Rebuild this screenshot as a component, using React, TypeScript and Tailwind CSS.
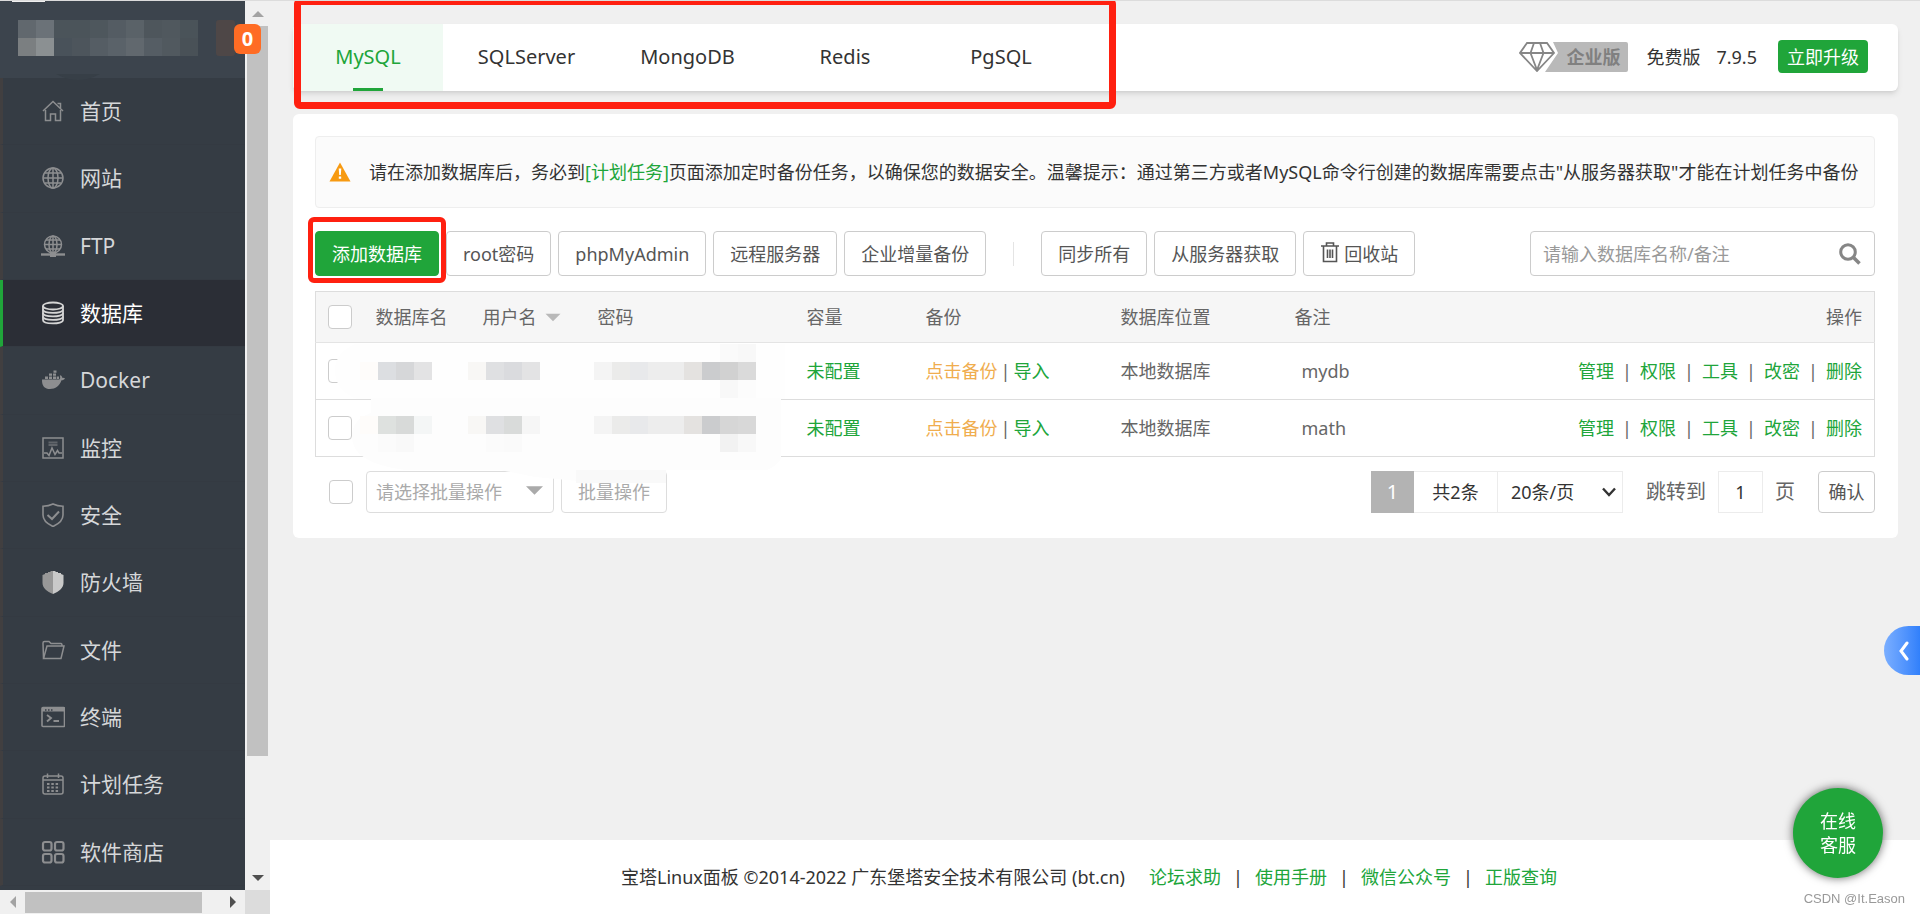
import type { ReactNode } from "react";

const navItems: { label: string; icon: ReactNode; active?: boolean }[] = [
  {
    label: "首页",
    icon: (
      <g strokeWidth="1.5">
        <path d="M2 12 L12 2.5 L22 12" />
        <path d="M4.500 11 V21.500 H9.500 V15 H14.500 V21.500 H19.500 V11" />
        <path d="M16.500 4.500 H19.500 V9" />
      </g>
    ),
  },
  {
    label: "网站",
    icon: (
      <g strokeWidth="1.5">
        <circle cx="12" cy="12" r="10" />
        <ellipse cx="12" cy="12" rx="5" ry="10" />
        <path d="M12 2 V22 M2 12 H22 M4 7 H20 M4 17 H20" />
      </g>
    ),
  },
  {
    label: "FTP",
    icon: (
      <g strokeWidth="1.5">
        <circle cx="12" cy="10.500" r="8.500" />
        <ellipse cx="12" cy="10.500" rx="4" ry="8.500" />
        <path d="M12 2 V19 M3.500 10.500 H20.500 M5 6 H19 M5 15 H19" />
        <path d="M0 20.500 H24" strokeWidth="2.4" />
        <path d="M9 21 H15" strokeWidth="4" />
      </g>
    ),
  },
  {
    label: "数据库",
    active: true,
    icon: (
      <g strokeWidth="1.8">
        <ellipse cx="12" cy="5" rx="10" ry="3.500" />
        <path d="M2 5 V19 C2 23.600 22 23.600 22 19 V5" />
        <path d="M2 8.500 C2 13 22 13 22 8.500 M2 12 C2 16.500 22 16.500 22 12 M2 15.500 C2 20 22 20 22 15.500" />
      </g>
    ),
  },
  {
    label: "Docker",
    icon: (
      <g fill="currentColor" stroke="none">
        <path d="M1 11.500 H18.500 C19.500 10.500 19.300 9 18.800 7.800 L19.800 7.200 C20.800 8 21.200 9 21.200 9.700 C22.200 9.500 23.200 9.700 24 10.300 C23.300 11.800 22 12.300 20.500 12.300 C18.500 18 14.500 21 9 21 C4 21 0.800 18.500 1 11.500 Z" />
        <path d="M4 8.500 h3 v2.400 h-3z M8 8.500 h3 v2.400 h-3z M12 8.500 h3 v2.400 h-3z M8 5.500 h3 v2.300 h-3z M12 5.500 h3 v2.300 h-3z M12.500 2.500 h3 v2.200 h-3z M15.700 8.500 h2.300 v2.400 h-2.300z" />
      </g>
    ),
  },
  {
    label: "监控",
    icon: (
      <g strokeWidth="1.5">
        <rect x="2" y="2" width="20" height="20" />
        <path d="M7.500 6.500 H16.500 M7.500 9 H16.500" opacity="0.5" strokeWidth="2" />
        <path d="M3 17 H6 L8 19.500 L11 12 L14 18.500 L16.500 14.500 L18 17 H21" />
      </g>
    ),
  },
  {
    label: "安全",
    icon: (
      <g strokeWidth="1.6">
        <path d="M12 1 C9 2.500 5.500 3.200 2 3.200 V12 C2 17.500 6.500 21 12 23.500 C17.500 21 22 17.500 22 12 V3.200 C18.500 3.200 15 2.500 12 1 Z" />
        <path d="M6.500 12 L11 16 L18 8.500" strokeWidth="2" />
      </g>
    ),
  },
  {
    label: "防火墙",
    icon: (
      <g stroke="none">
        <path d="M1.500 5 L4 4 V3 H7 V2 H9.500 V1 H12 V24 C6 21.500 1.500 18 1.500 13 Z" fill="#989898" />
        <path d="M12 1 L14.500 1 V2 H17 V3 H20 V4 L22.500 5 V13 C22.500 18 18 21.500 12 24 Z" fill="#c9c9c9" />
      </g>
    ),
  },
  {
    label: "文件",
    icon: (
      <g strokeWidth="1.5">
        <path d="M2.500 20 L2 5 Q2 3.500 3.500 3.500 H8 L10 5.500 H20 Q21 5.500 21 8" />
        <path d="M6 8 H23 L20 20.500 H2.500 Z" />
      </g>
    ),
  },
  {
    label: "终端",
    icon: (
      <g strokeWidth="1.6">
        <rect x="1" y="2.500" width="22.500" height="19" rx="1" />
        <rect x="1" y="2.500" width="22.500" height="4" fill="currentColor" stroke="none" />
        <path d="M6 10 L10 13 L6 16.500 M12.500 16 H18" strokeWidth="1.9" />
        <path d="M4 5 h1.500 M7 5 h1.500 M10 5 h1.500" stroke="#353c44" />
      </g>
    ),
  },
  {
    label: "计划任务",
    icon: (
      <g strokeWidth="1.5">
        <rect x="2" y="4" width="20" height="18" rx="2" />
        <path d="M2 8 H22 M6.500 1.500 V6 M17.500 1.500 V6" />
        <path d="M6 12 H19 M6 15.500 H19 M6 19 H19" strokeDasharray="2.5 1.8" strokeWidth="2" />
      </g>
    ),
  },
  {
    label: "软件商店",
    icon: (
      <g strokeWidth="2.2">
        <rect x="2" y="2" width="8.500" height="8.500" rx="2" />
        <rect x="14" y="2" width="8.500" height="8.500" rx="2" />
        <rect x="2" y="14" width="8.500" height="8.500" rx="2" />
        <rect x="14" y="14" width="8.500" height="8.500" rx="2" />
      </g>
    ),
  },
];

const tabs = [
  { label: "MySQL", width: "w-[150px]", active: true },
  { label: "SQLServer", width: "w-[167px]" },
  { label: "MongoDB", width: "w-[155px]" },
  { label: "Redis", width: "w-[160px]" },
  { label: "PgSQL", width: "w-[152px]" },
];

const databases = ["mydb", "math"];
const actions = ["管理", "权限", "工具", "改密", "删除"];
const footerLinks = ["论坛求助", "使用手册", "微信公众号", "正版查询"];

const titleMosaic = [
  ["#61686e", "#6b7278", "#4b545a", "#4b545a", "#4e575d", "#545c63", "#5a6268", "#4e565c", "#50585e", "#4a5359"],
  ["#7b7f81", "#8b9092", "#49525a", "#4d555c", "#555d64", "#5a6269", "#61686e", "#555d64", "#51595f", "#495157"],
];

// x, y, colour of each 18px block that hides the credentials
const cellMosaic: [number, number, string][] = [
  [45, 71, "#fefcfa"], [63, 71, "#dcdee1"], [81, 71, "#d6d7d9"], [99, 71, "#e3e3e4"],
  [153, 71, "#f8f7f5"], [171, 71, "#dfe0e2"], [189, 71, "#dadbde"], [207, 71, "#e3e3e4"],
  [279, 71, "#f4f4f4"], [297, 71, "#ebebea"], [315, 71, "#e8e9eb"], [333, 71, "#ededed"], [351, 71, "#ededed"],
  [369, 71, "#e4e2e0"], [387, 71, "#cbccce"], [405, 71, "#d1d1d1"], [423, 71, "#dadada"],
  [405, 53, "#fafafa"], [423, 53, "#f8f8f8"], [405, 89, "#f8f8f8"], [423, 89, "#fcfcfc"],
  [45, 125, "#fefcfa"], [63, 125, "#dee1df"], [81, 125, "#d8dad9"], [99, 125, "#f4f6f6"],
  [153, 125, "#f8f7f5"], [171, 125, "#dfe0e2"], [189, 125, "#d9dbda"], [207, 125, "#f6f6f6"],
  [279, 125, "#f4f4f4"], [297, 125, "#ebebea"], [315, 125, "#e8e9eb"], [333, 125, "#ededed"], [351, 125, "#ededed"],
  [369, 125, "#e4e2e0"], [387, 125, "#cbccce"], [405, 125, "#d6d6d6"], [423, 125, "#d8d8d8"],
  [63, 143, "#fbfbfb"], [81, 143, "#f9f9f9"], [171, 143, "#fbfbfb"], [189, 143, "#fafafa"],
  [405, 143, "#f2f2f2"], [423, 143, "#f8f8f8"],
];

function Checkbox({ label }: { label: string }) {
  return (
    <input
      type="checkbox"
      aria-label={label}
      className="block size-6 shrink-0 appearance-none rounded-sm border border-[#ccc] bg-white"
    />
  );
}

function ToolButton({ children }: { children: ReactNode }) {
  return (
    <button className="flex h-[45px] shrink-0 items-center gap-1 rounded border border-[#ccc] bg-white px-4 text-[#555] hover:bg-gray-50">
      {children}
    </button>
  );
}

function Arrow({ className, points }: { className: string; points: string }) {
  return (
    <svg viewBox="0 0 12 12" className={className} fill="currentColor" aria-hidden="true">
      <polygon points={points} />
    </svg>
  );
}

function Sidebar() {
  return (
    <aside className="sticky top-0 flex h-screen w-[270px] shrink-0 flex-col bg-[#f0f0f0]">
      <div className="flex min-h-0 flex-1">
        <div className="flex w-[245px] flex-col bg-[#353c44]">
          <div className="relative h-[78px] shrink-0 border-t border-[#dcdcdc] bg-[#3c444d]">
            <svg className="block" width="245" height="80" viewBox="0 1 245 80" aria-hidden="true">
              <rect x="12" y="0" width="33" height="2" fill="#f0f0f0" />
              {titleMosaic.map((row, y) =>
                row.map((fill, x) => (
                  <rect key={`${x}-${y}`} x={18 + x * 18} y={20 + y * 18} width="18" height="18" fill={fill} />
                ))
              )}
              <rect x="216" y="20" width="19" height="36" rx="3" fill="#4e4747" />
              <path d="M56 74 H100 Q78 86 56 74 Z" fill="#373f47" />
            </svg>
            <span className="absolute top-[23px] left-[234px] z-10 flex h-[30px] w-[27px] items-center justify-center rounded-md bg-[#ff6c24] text-xl font-bold text-white">
              0
            </span>
          </div>
          <nav className="flex min-h-0 flex-1 flex-col pb-1">
            {navItems.map((item) => (
              <a
                key={item.label}
                href="#"
                className={`flex flex-1 items-center border-b border-l-[3px] border-b-[#343a42] pl-[38px] text-[21px] ${
                  item.active ? "border-l-[#20a53a] bg-[#2b2e36] text-white" : "border-l-[#413f40] text-[#d5d7d9]"
                }`}
              >
                <svg
                  viewBox="0 0 24 24"
                  fill="none"
                  stroke="currentColor"
                  className={`mr-[15px] size-6 ${item.active ? "text-[#d5d5d5]" : "text-[#8d8e90]"}`}
                  aria-hidden="true"
                >
                  {item.icon}
                </svg>
                {item.label}
              </a>
            ))}
          </nav>
        </div>
        <div className="flex w-[25px] flex-col items-center border-t border-[#dcdcdc] pr-[2px] pl-[2px]">
          <div className="flex h-[25px] items-center">
            <Arrow className="size-3 text-[#a3a3a3]" points="0,9 6,3 12,9" />
          </div>
          <div className="min-h-0 w-full flex-1">
            <div className="h-[87%] bg-[#c1c1c1]" />
          </div>
          <div className="flex h-[25px] items-center">
            <Arrow className="size-3 text-[#505050]" points="0,3 12,3 6,9" />
          </div>
        </div>
      </div>
      <div className="flex h-6 shrink-0 items-center">
        <div className="flex w-[25px] justify-center">
          <Arrow className="size-3 text-[#a3a3a3]" points="9,0 9,12 3,6" />
        </div>
        <div className="h-[21px] w-[177px] bg-[#c1c1c1]" />
        <div className="flex flex-1 justify-end pr-[6px]">
          <Arrow className="size-3 text-[#505050]" points="3,0 9,6 3,12" />
        </div>
        <div className="h-full w-[25px] bg-[#dcdcdc]" />
      </div>
    </aside>
  );
}

function Header() {
  return (
    <header className="relative flex h-[67px] items-center justify-between rounded-md bg-white pr-[30px] shadow-md">
      <div className="flex h-full">
        {tabs.map((tab) => (
          <button
            key={tab.label}
            className={`flex flex-col items-center text-xl ${tab.width} ${
              tab.active ? "rounded-l-md bg-[#f0faf3] text-[#20a53a]" : "text-[#333]"
            }`}
          >
            <span className="flex flex-1 items-center pt-[2px]">{tab.label}</span>
            <span className={`h-[3px] w-[30px] ${tab.active ? "bg-[#20a53a]" : ""}`} />
          </button>
        ))}
      </div>
      <div className="flex items-center pb-[2px] text-lg text-[#333]">
        <div className="relative flex items-center">
          <svg width="109" height="30" viewBox="0 0 109 30" fill="none" aria-hidden="true">
            <path d="M34 0 H107 Q109 0 109 2 V28 Q109 30 107 30 H26 L39 11 Z" fill="#b9b9b9" />
            <path
              d="M8 1 H28 L35 11 L18 29 L1 11 Z M1 11 H35 M11.500 11 L18 28 L24.500 11 L21 1 M11.500 11 L15 1"
              stroke="#868686"
              strokeWidth="1.8"
            />
          </svg>
          <span className="absolute right-2 text-lg leading-none font-bold text-[#808080]">企业版</span>
        </div>
        <span className="ml-[18px]">免费版</span>
        <span className="ml-4">7.9.5</span>
        <button className="ml-[21px] flex h-[33px] items-center rounded bg-[#20a53a] px-[9px] text-white">立即升级</button>
      </div>
      <div className="pointer-events-none absolute -top-[26px] left-px h-[111px] w-[822px] rounded-md border-[7px] border-[#ff2010]" />
    </header>
  );
}

function DatabaseTable() {
  return (
    <div className="relative mt-[15px]">
      <table className="w-full table-fixed border-collapse border border-[#ddd] text-left text-lg text-[#666]">
        <thead>
          <tr className="h-[51px] border-b border-[#e4e4e4] bg-[#f6f6f6]">
            <th className="w-[49px] pl-3">
              <Checkbox label="全选" />
            </th>
            <th className="w-[107px] pl-[11px] font-normal">数据库名</th>
            <th className="w-[115px] pl-[11px] font-normal">
              <span className="flex items-center gap-2">
                用户名
                <Arrow className="h-[15px] w-4 text-[#b9b9b9]" points="0,3 12,3 6,9" />
              </span>
            </th>
            <th className="w-[209px] pl-[11px] font-normal">密码</th>
            <th className="w-[119px] pl-[11px] font-normal">容量</th>
            <th className="w-[195px] pl-[11px] font-normal">备份</th>
            <th className="w-[174px] pl-[11px] font-normal">数据库位置</th>
            <th className="pl-[11px] font-normal">备注</th>
            <th className="w-[300px] pr-3 text-right font-normal">操作</th>
          </tr>
        </thead>
        <tbody>
          {databases.map((name) => (
            <tr key={name} className="h-[57px] border-b border-[#ddd]">
              <td className="pl-3">
                <Checkbox label={name} />
              </td>
              <td />
              <td />
              <td />
              <td className="pl-[11px]">
                <a href="#" className="text-[#20a53a]">未配置</a>
              </td>
              <td className="pl-[11px]">
                <a href="#" className="text-[#f0ad4e]">点击备份</a>
                <span className="px-[3px]">|</span>
                <a href="#" className="text-[#20a53a]">导入</a>
              </td>
              <td className="pl-[11px]">本地数据库</td>
              <td className="pl-[18px]">{name}</td>
              <td className="pr-3">
                <div className="flex justify-end">
                  {actions.map((action, i) => (
                    <span key={action} className="flex">
                      {i > 0 && <span className="w-[26px] text-center">|</span>}
                      <a href="#" className="text-[#20a53a]">{action}</a>
                    </span>
                  ))}
                </div>
              </td>
            </tr>
          ))}
        </tbody>
      </table>
      <svg
        className="pointer-events-none absolute top-0 left-0 z-10"
        width="480"
        height="206"
        viewBox="0 0 480 206"
        aria-hidden="true"
      >
        <path d="M40 53 H470 V108 H42 Q20 100 20 79 Q20 62 40 53 Z" fill="#fefefe" />
        <path d="M56 107 H466 V168 Q460 176 452 179 H351 V192 H285 L220 186 L185 179 H90 Q37 172 37 146 Q37 128 56 122 Z" fill="#fdfdfd" />
        <rect x="261" y="179" width="90" height="13" fill="#f9f9f9" />
        {cellMosaic.map(([x, y, fill]) => (
          <rect key={`${x}-${y}`} x={x} y={y} width="18" height="18" fill={fill} />
        ))}
      </svg>
    </div>
  );
}

function TableFooter() {
  return (
    <div className="mt-[14px] flex h-[42px] items-stretch justify-between text-lg">
      <div className="flex items-stretch text-[#aaa]">
        <div className="flex items-center pr-[13px] pl-[14px]">
          <Checkbox label="全选当前页" />
        </div>
        <div className="relative flex">
          <select
            aria-label="批量操作类型"
            className="w-[188px] appearance-none rounded-sm border border-[#ddd] bg-white pb-px pl-[9px]"
          >
            <option>请选择批量操作</option>
          </select>
          <Arrow className="pointer-events-none absolute top-[11px] right-[11px] size-[17px]" points="0,3 12,3 6,9" />
        </div>
        <button className="ml-[7px] rounded border border-[#ddd] px-4">批量操作</button>
      </div>
      <div className="flex items-stretch text-[#666]">
        <span className="flex w-[43px] items-center justify-center bg-[#b3b3b3] text-xl text-white">1</span>
        <span className="flex w-[83px] items-center justify-center border-y border-[#ececec] text-[#333]">共2条</span>
        <div className="relative flex">
          <select
            aria-label="每页条数"
            className="w-[126px] appearance-none border border-[#ececec] bg-white pl-[13px] text-[#333]"
          >
            <option>20条/页</option>
          </select>
          <svg
            className="pointer-events-none absolute top-[13px] right-[6px]"
            width="16"
            height="16"
            viewBox="0 0 16 16"
            fill="none"
            stroke="#333"
            strokeWidth="2.4"
            aria-hidden="true"
          >
            <path d="M2 4.500 L8 11 L14 4.500" />
          </svg>
        </div>
        <label htmlFor="page" className="flex items-center pr-[12px] pl-[23px] text-xl">跳转到</label>
        <input id="page" defaultValue="1" className="w-[45px] border border-[#ececec] text-center text-[#333]" />
        <span className="flex items-center pr-[23px] pl-3 text-xl">页</span>
        <button className="w-[57px] rounded-sm border border-[#ccc] text-[#555]">确认</button>
      </div>
    </div>
  );
}

export default function App() {
  return (
    <div className="flex min-h-screen bg-[#f0f0f0] font-['Noto_Sans','Noto_Sans_CJK_SC',sans-serif] text-lg leading-6">
      <Sidebar />
      <div className="flex min-w-0 flex-1 flex-col overflow-hidden border-t border-[#dcdcdc]">
        <div className="flex flex-col gap-[23px] pt-[23px] pr-[22px] pl-[23px]">
          <Header />
          <main className="rounded-md bg-white pt-[22px] pr-[23px] pb-[25px] pl-[22px]">
            <div className="flex h-[72px] items-center rounded-sm border border-[#eee] bg-[#fbfbfb] pl-[13px] text-[#333]">
              <svg width="22" height="20" viewBox="0 0 22 20" className="mr-[18px] shrink-0" aria-hidden="true">
                <path d="M11 0.500 L21.500 19.500 H0.500 Z" fill="#f79a11" />
                <path d="M9.700 6.500 H12.300 L11.800 13 H10.200 Z M9.800 14.500 H12.200 V16.700 H9.800 Z" fill="#fff" />
              </svg>
              <p className="whitespace-nowrap">
                请在添加数据库后，务必到<a href="#" className="text-[#20a53a]">[计划任务]</a>
                页面添加定时备份任务，以确保您的数据安全。温馨提示：通过第三方或者MySQL命令行创建的数据库需要点击"从服务器获取"才能在计划任务中备份
              </p>
            </div>

            <div className="mt-[23px] flex items-center justify-between">
              <div className="flex items-center gap-[7px]">
                <div className="relative">
                  <button className="flex h-[45px] items-center rounded border border-[#20a53a] bg-[#20a53a] px-4 text-white">
                    添加数据库
                  </button>
                  <div className="pointer-events-none absolute -inset-x-[7px] -top-[14px] -bottom-[7px] z-10 rounded-md border-[5px] border-[#ff2010]" />
                </div>
                <ToolButton>root密码</ToolButton>
                <ToolButton>phpMyAdmin</ToolButton>
                <ToolButton>远程服务器</ToolButton>
                <ToolButton>企业增量备份</ToolButton>
                <span className="mx-5 h-6 w-px bg-[#e4e4e4]" />
                <ToolButton>同步所有</ToolButton>
                <ToolButton>从服务器获取</ToolButton>
                <ToolButton>
                  <svg
                    width="20"
                    height="22"
                    viewBox="0 0 20 22"
                    fill="none"
                    stroke="currentColor"
                    strokeWidth="1.6"
                    className="-mt-1"
                    aria-hidden="true"
                  >
                    <path d="M1 5 H19 M6.500 5 V2 H13.500 V5 M3.500 5 V20.500 H16.500 V5 M7.500 8.500 V17 M10 8.500 V17 M12.500 8.500 V17" />
                  </svg>
                  回收站
                </ToolButton>
              </div>
              <div className="flex h-[45px] w-[345px] items-center rounded-sm border border-[#ccc] pr-[13px] pl-3">
                <input
                  type="text"
                  aria-label="搜索数据库"
                  placeholder="请输入数据库名称/备注"
                  className="min-w-0 flex-1 outline-none placeholder:text-[#999]"
                />
                <button aria-label="搜索">
                  <svg width="22" height="22" viewBox="0 0 22 22" fill="none" stroke="#868686" aria-hidden="true">
                    <circle cx="9" cy="9" r="7.300" strokeWidth="3" />
                    <path d="M14.500 14.500 L20.500 20.500" strokeWidth="3.5" />
                  </svg>
                </button>
              </div>
            </div>

            <DatabaseTable />
            <TableFooter />
          </main>
        </div>

        <footer className="mt-auto flex h-[74px] items-center justify-center bg-white pr-3 text-[#333]">
          <span className="mr-6">宝塔Linux面板 ©2014-2022 广东堡塔安全技术有限公司 (bt.cn)</span>
          {footerLinks.map((link, i) => (
            <span key={link} className="flex">
              {i > 0 && <span className="w-[34px] text-center">|</span>}
              <a href="#" className="text-[#20a53a]">{link}</a>
            </span>
          ))}
        </footer>
      </div>

      <button
        aria-label="展开"
        className="fixed top-[626px] right-0 flex h-[49px] w-9 items-center justify-center rounded-l-full bg-linear-to-r from-[#7aaeff] to-[#3180fb] pl-1"
      >
        <svg width="12" height="20" viewBox="0 0 12 20" fill="none" stroke="#fff" strokeWidth="3" strokeLinecap="round" aria-hidden="true">
          <path d="M9 2 L3 10 L9 18" />
        </svg>
      </button>
      <button className="fixed right-[37px] bottom-9 size-[90px] rounded-full bg-[#20a53a] text-lg leading-6 text-white shadow-[0_0_10px_rgba(0,0,0,0.6)]">
        在线
        <br />
        客服
      </button>
      <span className="fixed right-[15px] bottom-[5px] font-['Liberation_Sans',sans-serif] text-[13px] leading-5 text-[#999]">
        CSDN @It.Eason
      </span>
    </div>
  );
}
